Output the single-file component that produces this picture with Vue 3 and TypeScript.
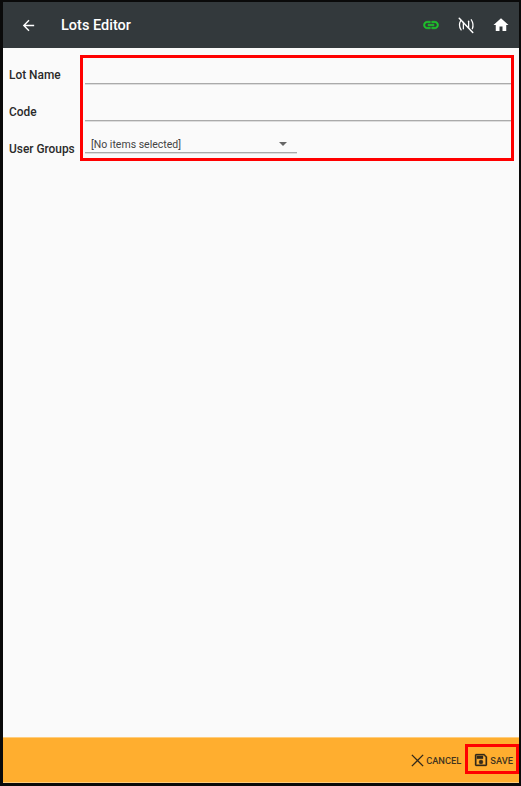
<script setup lang="ts">
// Lots editor form, the red frames are annotations lying over the screen
const fields = [
  { label: "Lot Name" },
  { label: "Code" },
];
</script>

<template>
  <div class="screen">
    <header class="toolbar">
      <button class="back" aria-label="Back">
        <svg width="17" height="17" viewBox="0 0 24 24"><path d="M20 11H7.83l5.59-5.59L12 4l-8 8 8 8 1.41-1.41L7.83 13H20z" fill="#fff" /></svg>
      </button>
      <h1 class="title">Lots Editor</h1>
      <div class="actions">
        <svg width="18" height="18" viewBox="0 0 24 24"><path d="M3.9 12c0-1.71 1.39-3.1 3.1-3.1h4V7H7c-2.76 0-5 2.24-5 5s2.24 5 5 5h4v-1.9H7c-1.71 0-3.1-1.39-3.1-3.1zM8 13h8v-2H8v2zm9-6h-4v1.9h4c1.71 0 3.1 1.39 3.1 3.1s-1.39 3.1-3.1 3.1h-4V17h4c2.76 0 5-2.24 5-5s-2.24-5-5-5z" fill="#1fc32b" stroke="#1fc32b" stroke-width="0.8" /></svg>
        <svg width="18" height="18" viewBox="0 0 24 24" fill="none" stroke="#fff" stroke-width="1.7" stroke-linecap="round">
          <path d="M3 3l18 19" stroke-width="2" />
          <path d="M5 6C2.8 10 3 15 5.5 18.5" />
          <path d="M8.5 17V8.5" />
          <path d="M15.5 15.5V7" />
          <path d="M19 5c2.6 4 2.8 8.5 1.5 12" />
        </svg>
        <svg width="18" height="18" viewBox="0 0 24 24"><path d="M10 20v-6h4v6h5v-8h3L12 3 2 12h3v8z" fill="#fff" /></svg>
      </div>
    </header>

    <main class="form">
      <div v-for="f in fields" :key="f.label" class="row">
        <label class="label">{{ f.label }}</label>
        <div class="input"></div>
      </div>
      <div class="row">
        <label class="label">User Groups</label>
        <div class="select">
          <span>[No items selected]</span>
          <i class="caret"></i>
        </div>
      </div>
    </main>

    <footer class="bottom">
      <button class="btn">
        <svg width="15" height="15" viewBox="0 0 24 24"><path d="M3 3l18 18M21 3L3 21" stroke="#33291a" stroke-width="2.2" fill="none" /></svg>
        CANCEL
      </button>
      <button class="btn">
        <svg width="16" height="16" viewBox="0 0 24 24"><path d="M17 3H5a2 2 0 0 0-2 2v14a2 2 0 0 0 2 2h14a2 2 0 0 0 2-2V7l-4-4zm2 16H5V5h11.17L19 7.83V19zm-7-7a3 3 0 1 0 0 6 3 3 0 0 0 0-6zM6 6h9v4H6z" fill="#33291a" stroke="#33291a" stroke-width="0.5" /></svg>
        SAVE
      </button>
    </footer>

    <div class="mark mark-form"></div>
    <div class="mark mark-save"></div>
  </div>
</template>

<style scoped>
.screen {
  position: relative;
  box-sizing: border-box;
  width: 521px;
  height: 786px;
  display: flex;
  flex-direction: column;
  background: #fafafa;
  border: solid #0a0a0a;
  border-width: 2px 2px 3px 3px;
  font-family: Roboto, "Liberation Sans", sans-serif;
  overflow: hidden;
}
.toolbar {
  height: 46px;
  flex: none;
  display: flex;
  align-items: center;
  background: #33393c;
  color: #fff;
}
.back {
  display: flex;
  margin-left: 17px;
  padding: 0;
  border: 0;
  background: none;
}
.title {
  margin: 0 0 0 24px;
  font-size: 14.5px;
  font-weight: 500;
}
.actions {
  margin-left: auto;
  display: flex;
  align-items: center;
  margin-right: 9px;
  gap: 17px;
}
.form {
  flex: 1;
  padding: 8px 5px 0 6px;
}
.row {
  display: flex;
  height: 37px;
  align-items: flex-start;
}
.label {
  width: 76px;
  flex: none;
  padding-top: 12px;
  font-size: 11.9px;
  font-weight: 500;
  color: #2a2a2a;
}
.input {
  flex: 1;
  height: 27px;
  border-bottom: 1px solid #aaa;
  box-shadow: 0 1px #ddd;
}
.select {
  width: 212px;
  height: 20px;
  margin-top: 3px;
  box-sizing: border-box;
  display: flex;
  align-items: center;
  justify-content: space-between;
  padding: 3px 10px 0 6px;
  border-bottom: 1px solid #aaa;
  box-shadow: 0 1px #ddd;
  font-size: 10.5px;
  color: #444;
}
.caret {
  border: 4px solid transparent;
  border-top: 4px solid #666;
  border-bottom: 0;
}
.bottom {
  height: 46px;
  flex: none;
  display: flex;
  align-items: center;
  justify-content: flex-end;
  gap: 12px;
  padding-right: 6px;
  background: #ffae2f;
  border-top: 1px solid #ffcd7d;
  border-bottom: 1px solid #ffcd7d;
  box-sizing: border-box;
}
.btn {
  display: flex;
  align-items: center;
  gap: 1px;
  padding: 0;
  border: 0;
  background: none;
  font: 500 9.3px Roboto, "Liberation Sans", sans-serif;
  color: #43351f;
}
.mark {
  position: absolute;
  border: 3px solid #f00;
  box-sizing: border-box;
}
.mark-form {
  left: 77px;
  top: 53px;
  width: 434px;
  height: 106px;
}
.mark-save {
  left: 462px;
  top: 742px;
  width: 54px;
  height: 30px;
}
</style>
